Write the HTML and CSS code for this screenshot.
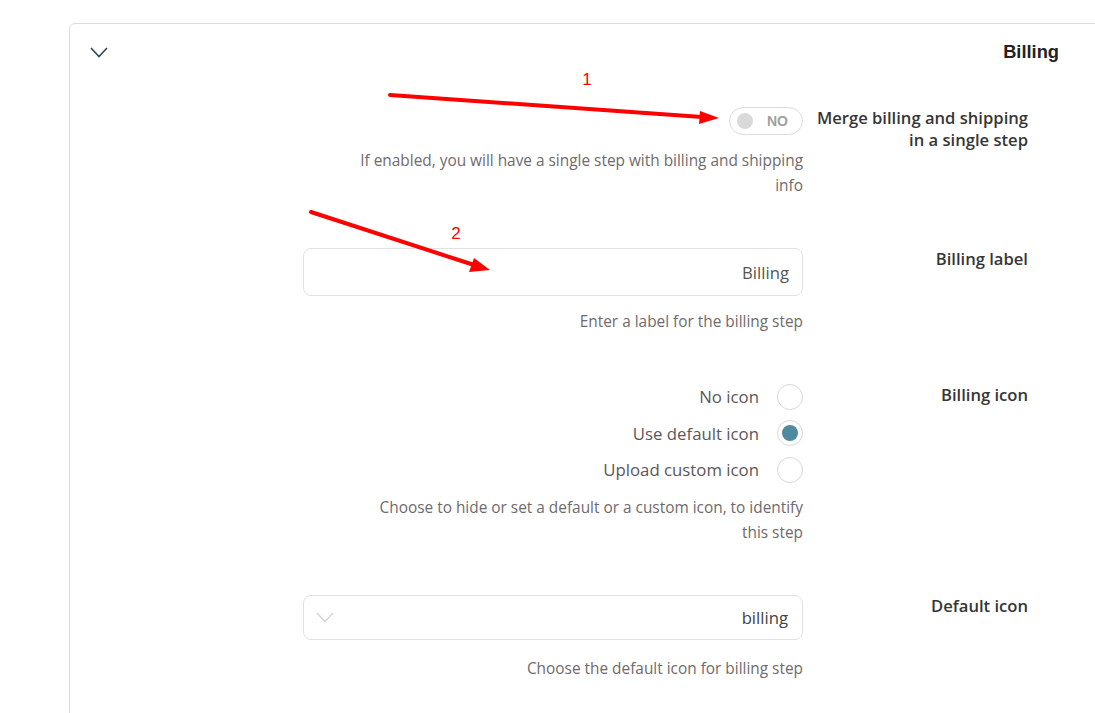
FILE: index.html
```html
<!DOCTYPE html>
<html>
<head>
<meta charset="utf-8">
<link rel="stylesheet" href="styles.css">
</head>
<body>
<div class="card">
  <div class="card-head">
    <svg class="head-chevron" width="18" height="11" viewBox="0 0 18 11"><polyline points="1,1 9,9.5 17,1" fill="none" stroke="#2e4a58" stroke-width="1.6"/></svg>
    <h2 class="card-title">Billing</h2>
  </div>
  <div class="rows">
    <div class="row">
      <div class="field">
        <div class="toggle-wrap">
          <div class="toggle"><span class="knob"></span><span class="toggle-text">NO</span></div>
        </div>
        <p class="desc">If enabled, you will have a single step with billing and shipping info</p>
      </div>
      <div class="label">Merge billing and shipping in a single step</div>
    </div>
    <div class="row">
      <div class="field">
        <div class="input">Billing</div>
        <p class="desc">Enter a label for the billing step</p>
      </div>
      <div class="label">Billing label</div>
    </div>
    <div class="row">
      <div class="field">
        <div class="radios">
          <div class="radio-item"><span>No icon</span><span class="radio"></span></div>
          <div class="radio-item"><span>Use default icon</span><span class="radio checked"></span></div>
          <div class="radio-item"><span>Upload custom icon</span><span class="radio"></span></div>
        </div>
        <p class="desc desc-tight">Choose to hide or set a default or a custom icon, to identify this step</p>
      </div>
      <div class="label">Billing icon</div>
    </div>
    <div class="row">
      <div class="field">
        <div class="select">
          <svg class="select-chevron" width="18" height="11" viewBox="0 0 18 11"><polyline points="1,1 9,9.5 17,1" fill="none" stroke="#d2d2d2" stroke-width="1.2"/></svg>
          <span>billing</span>
        </div>
        <p class="desc desc-loose">Choose the default icon for billing step</p>
      </div>
      <div class="label">Default icon</div>
    </div>
  </div>
</div>
<svg class="annotations" width="1095" height="713" viewBox="0 0 1095 713">
  <line x1="390" y1="95" x2="702" y2="117" stroke="#ff0000" stroke-width="4" stroke-linecap="round"/>
  <polygon points="719,118 700,111 699,124" fill="#ff0000"/>
  <line x1="311" y1="212" x2="474" y2="265" stroke="#ff0000" stroke-width="4" stroke-linecap="round"/>
  <polygon points="490,270 474,258 469,272" fill="#ff0000"/>
  <text x="587" y="85" fill="#ff0000" font-family="Liberation Sans, Arial, sans-serif" font-size="17" text-anchor="middle">1</text>
  <text x="456" y="239" fill="#ff0000" font-family="Liberation Sans, Arial, sans-serif" font-size="17" text-anchor="middle">2</text>
</svg>
</body>
</html>
```
FILE: styles.css
```css
html, body {
  margin: 0;
  padding: 0;
  background: #ffffff;
  overflow: hidden;
}
body {
  width: 1095px;
  height: 713px;
  font-family: "Open Sans", "Noto Sans", sans-serif;
  position: relative;
}
.card {
  margin: 23px 0 0 69px;
  width: 1100px;
  height: 720px;
  border: 1px solid #dcdcdc;
  border-top-left-radius: 6px;
  box-sizing: border-box;
}
.card-head {
  display: flex;
  align-items: center;
  height: 55px;
  padding: 0 0 0 20px;
  width: 989px;
  box-sizing: border-box;
}
.head-chevron {
  display: block;
  margin-top: 2px;
}
.card-title {
  margin: 0 0 0 auto;
  font-family: "Liberation Sans", Arial, sans-serif;
  font-weight: bold;
  font-size: 18.3px;
  color: #222;
}
.rows {
  display: flex;
  flex-direction: column;
  gap: 50px;
  padding: 28px 0 0 233px;
}
.row {
  display: grid;
  grid-template-columns: 500px 213px;
  column-gap: 12px;
  align-items: start;
}
.field {
  display: flex;
  flex-direction: column;
  align-items: flex-end;
}
.label {
  text-align: right;
  font-size: 16.6px;
  line-height: 22px;
  font-weight: 600;
  color: #363636;
  padding-left: 0;
}
.desc {
  margin: 13px 0 0 0;
  text-align: right;
  font-size: 15.4px;
  line-height: 25px;
  color: #6f6a6c;
  max-width: 452px;
}
.desc-tight {
  margin-top: 12px;
}
.desc-loose {
  margin-top: 16px;
}
.toggle {
  width: 74px;
  height: 28px;
  border: 1px solid #dddddd;
  border-radius: 15px;
  box-sizing: border-box;
  display: flex;
  align-items: center;
  padding: 0 14px 0 7px;
  justify-content: space-between;
}
.knob {
  width: 16px;
  height: 16px;
  border-radius: 50%;
  background: #d9d9d9;
}
.toggle-text {
  font-family: "Liberation Sans", Arial, sans-serif;
  font-weight: bold;
  font-size: 14px;
  color: #a0a0a0;
}
.input {
  width: 500px;
  height: 48px;
  border: 1px solid #e1e1e1;
  border-radius: 8px;
  box-sizing: border-box;
  display: flex;
  align-items: center;
  justify-content: flex-end;
  padding: 0 13px;
  font-size: 16.7px;
  color: #555;
}
.radios {
  display: flex;
  flex-direction: column;
  gap: 9.5px;
  margin-top: -1px;
}
.radio-item {
  display: flex;
  align-items: center;
  justify-content: flex-end;
  gap: 18px;
  font-size: 16.8px;
  color: #5d5658;
  height: 27px;
}
.radio {
  width: 26px;
  height: 26px;
  border: 1px solid #d9d9d9;
  border-radius: 50%;
  box-sizing: border-box;
  position: relative;
  background: #fff;
}
.radio.checked::after {
  content: "";
  position: absolute;
  left: 4px;
  top: 4px;
  width: 16px;
  height: 16px;
  border-radius: 50%;
  background: #4f8aa3;
}
.select {
  width: 500px;
  height: 45px;
  border: 1px solid #e1e1e1;
  border-radius: 8px;
  box-sizing: border-box;
  display: flex;
  align-items: center;
  justify-content: space-between;
  padding: 0 14px 0 12px;
  font-size: 16.7px;
  color: #444;
}
.select-chevron {
  display: block;
}
.annotations {
  position: absolute;
  left: 0;
  top: 0;
  pointer-events: none;
}
```
